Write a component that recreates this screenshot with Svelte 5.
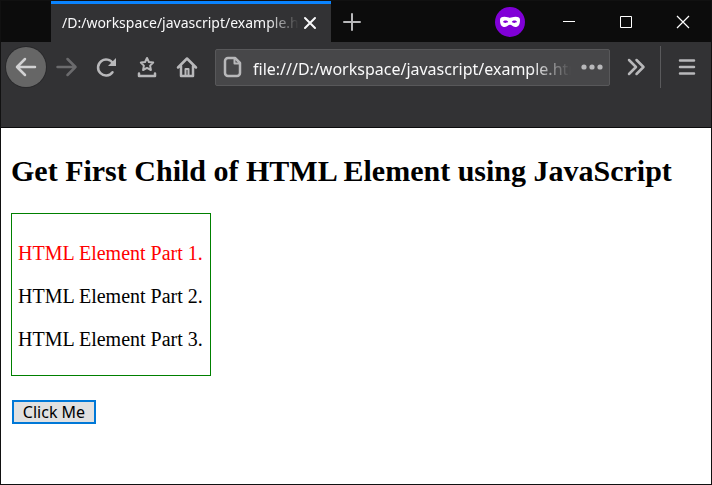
<script lang="ts">
	const tabTitle = '/D:/workspace/javascript/example.html';
	const parts = ['HTML Element Part 1.', 'HTML Element Part 2.', 'HTML Element Part 3.'];

	let address = $state('file:///D:/workspace/javascript/example.html');
	let highlighted = $state(0);
</script>

<div class="window">
	<header class="title-bar">
		<div class="tab">
			<span class="tab-title">{tabTitle}</span>
			<button class="tab-close" aria-label="Close tab">
				<svg width="14" height="14" viewBox="0 0 14 14">
					<path d="M2 2l10 10M12 2L2 12" stroke="#f9f9fa" stroke-width="2" stroke-linecap="round" />
				</svg>
			</button>
		</div>
		<button class="new-tab" aria-label="New tab">
			<svg width="20" height="20" viewBox="0 0 20 20">
				<path d="M10 2v16M2 10h16" stroke="#b8b8ba" stroke-width="2" stroke-linecap="round" />
			</svg>
		</button>
		<div class="private">
			<svg width="20" height="12" viewBox="0 0 20 12">
				<path
					fill="#fff"
					fill-rule="evenodd"
					d="M0 4C0 2 1.500 .8 4.500 .8c2.500 0 4 1 5.500 1s3-1 5.500-1c3 0 4.500 1.200 4.500 3.200 0 4.500-1.500 7-4.800 7-2.700 0-3.400-2.200-5.200-2.200S7.500 11 4.800 11C1.500 11 0 8.500 0 4zM3 5.700C4 7.300 7 7.300 8.200 5.700 7 4.100 4 4.100 3 5.700zM11.800 5.700c1.200 1.600 4.200 1.600 5.200 0-1-1.600-4-1.600-5.200 0z"
				/>
			</svg>
		</div>
		<div class="window-controls">
			<button aria-label="Minimize">
				<svg width="14" height="14" viewBox="0 0 14 14"><path d="M1 6.500h12" stroke="#fff" /></svg>
			</button>
			<button aria-label="Maximize">
				<svg width="14" height="14" viewBox="0 0 14 14">
					<path d="M1.500 1.500h11v11h-11z" stroke="#fff" />
				</svg>
			</button>
			<button aria-label="Close">
				<svg width="14" height="14" viewBox="0 0 14 14">
					<path d="M1 1l12 12M13 1L1 13" stroke="#fff" stroke-width="1.200" />
				</svg>
			</button>
		</div>
	</header>

	<nav class="toolbar">
		<button class="tool back" aria-label="Back">
			<svg width="24" height="24" viewBox="0 0 24 24">
				<path d="M3 12h18M11 4l-8 8 8 8" />
			</svg>
		</button>
		<button class="tool" aria-label="Forward" disabled>
			<svg width="24" height="24" viewBox="0 0 24 24">
				<path d="M3.500 12h18M13.500 4l8 8-8 8" />
			</svg>
		</button>
		<button class="tool" aria-label="Reload">
			<svg width="24" height="24" viewBox="0 0 24 24">
				<path d="M18.500 17.200A8 8 0 1 1 19 8.500" />
				<path d="M22 3v8h-8z" class="solid" />
			</svg>
		</button>
		<button class="tool" aria-label="Bookmarks">
			<svg width="24" height="24" viewBox="0 0 24 24">
				<path
					d="M13 3l1.900 4 4.300.6-3.100 3 .8 4.400-3.900-2.100L9.100 15l.8-4.400-3.100-3 4.300-.6z"
					class="thin"
				/>
				<path d="M5 18.500v2.500h16v-2.500" />
			</svg>
		</button>
		<button class="tool" aria-label="Home">
			<svg width="24" height="24" viewBox="0 0 24 24">
				<path d="M4 12.500l9-9 9 9M7 11v10h12V11" />
				<path d="M11.500 20v-6h3v6" class="thin" />
			</svg>
		</button>
		<div class="address-bar">
			<svg width="20" height="22" viewBox="0 0 20 22">
				<path d="M5 2h7l5 5v10a3 3 0 0 1-3 3H5a3 3 0 0 1-3-3V5a3 3 0 0 1 3-3z" />
				<path d="M11.500 2.500V7.500H16.500" class="thin" />
			</svg>
			<input class="address" type="text" aria-label="Address" bind:value={address} />
			<button class="page-actions" aria-label="Page actions">
				<svg width="22" height="6" viewBox="0 0 22 6">
					<circle cx="3" cy="3" r="2.600" />
					<circle cx="11" cy="3" r="2.600" />
					<circle cx="19" cy="3" r="2.600" />
				</svg>
			</button>
		</div>
		<button class="tool more" aria-label="More tools">
			<svg width="24" height="24" viewBox="0 0 24 24">
				<path d="M6 5l7 7-7 7M13.500 5l7 7-7 7" />
			</svg>
		</button>
		<button class="tool menu" aria-label="Open menu">
			<svg width="24" height="24" viewBox="0 0 24 24">
				<path d="M6 5.500h14M6 12h14M6 18.500h14" />
			</svg>
		</button>
	</nav>

	<main>
		<h2>Get First Child of HTML Element using JavaScript</h2>
		<div class="parent">
			{#each parts as part, i (part)}
				<p class:highlighted={i === highlighted}>{part}</p>
			{/each}
		</div>
		<button class="click-me" onclick={() => (highlighted = 0)}>Click Me</button>
	</main>
</div>

<style>
	.window {
		display: flex;
		flex-direction: column;
		box-sizing: border-box;
		min-height: 100vh;
		border: 1px solid #111;
		background: #fff;
		font-family: 'Noto Sans', 'Open Sans', sans-serif;
	}

	button {
		margin: 0;
		padding: 0;
		border: none;
		background: none;
		font-family: inherit;
	}

	svg {
		display: block;
		fill: none;
	}

	.title-bar {
		display: flex;
		height: 41px;
		padding-left: 50px;
		background: #0c0c0c;
	}

	.tab {
		display: flex;
		align-items: center;
		flex: 0 1 280px;
		box-sizing: border-box;
		min-width: 0;
		padding: 0 14px 0 11px;
		border-top: 3px solid #0a84ff;
		background: #323234;
	}

	.tab-title {
		flex: 1;
		overflow: hidden;
		color: #f9f9fa;
		font-size: 14px;
		line-height: 20px;
		white-space: nowrap;
		mask-image: linear-gradient(to left, transparent, #000 32px);
	}

	.tab-close {
		margin-left: 4px;
	}

	.new-tab {
		display: flex;
		align-items: center;
		justify-content: center;
		width: 42px;
	}

	.private {
		display: flex;
		align-items: center;
		justify-content: center;
		align-self: center;
		width: 30px;
		height: 30px;
		margin-left: auto;
		border-radius: 50%;
		background: #8000d7;
	}

	.window-controls {
		display: flex;
		margin-left: 15px;
	}

	.window-controls button {
		display: flex;
		align-items: center;
		justify-content: center;
		width: 57px;
	}

	.toolbar {
		display: flex;
		align-items: center;
		padding: 4px 0 39px 5px;
		border-bottom: 1px solid #0c0c0d;
		background: #323234;
	}

	.tool {
		display: flex;
		align-items: center;
		justify-content: center;
		flex: none;
		width: 40px;
		height: 42px;
	}

	.tool path,
	.address-bar path {
		stroke: #b8b8ba;
		stroke-width: 2.5;
		stroke-linecap: round;
		stroke-linejoin: round;
	}

	.tool path.thin,
	.address-bar path.thin {
		stroke-width: 2;
	}

	.tool path.solid {
		fill: #b8b8ba;
		stroke: none;
	}

	.tool:disabled path {
		stroke: #6b6b6d;
	}

	.back {
		height: 40px;
		border-radius: 50%;
		background: #666;
		box-shadow: 0 0 0 1px #29292b;
	}

	.back path {
		stroke: #d2d2d3;
	}

	.address-bar {
		display: flex;
		align-items: center;
		flex: 1;
		box-sizing: border-box;
		min-width: 0;
		height: 37px;
		margin-left: 9px;
		padding: 0 6px 0 7px;
		border: 1px solid #58585a;
		border-radius: 2px;
		background: #474749;
	}

	.address {
		flex: 1;
		min-width: 0;
		margin: 0 10px;
		padding: 3px 0 0;
		border: none;
		outline: none;
		background: none;
		color: #f9f9fa;
		font-family: inherit;
		font-size: 16px;
		line-height: 24px;
		mask-image: linear-gradient(to left, transparent, #000 40px);
	}

	.page-actions circle {
		fill: #b8b8ba;
	}

	.more {
		width: 50px;
	}

	.menu {
		width: 51px;
		border-left: 1px solid #5a5a5c;
	}

	main {
		padding: 0 10px 10px;
		color: #000;
		font-family: 'Liberation Serif', 'Times New Roman', serif;
		font-size: 20px;
		line-height: 23px;
	}

	h2 {
		margin: 26px 0 25px;
		font-size: 30px;
		line-height: 34px;
	}

	.parent {
		box-sizing: border-box;
		width: 200px;
		padding: 8px 6px 4px;
		border: 1px solid #008000;
	}

	.parent p {
		margin: 20px 0;
		white-space: nowrap;
	}

	.parent .highlighted {
		color: #f00;
	}

	.click-me {
		display: block;
		width: 84px;
		height: 24px;
		margin: 24px 0 0 1px;
		border: 2px solid #0078d7;
		background: #e1e1e1;
		color: #000;
		font-family: 'Noto Sans', Tahoma, sans-serif;
		font-size: 16px;
		line-height: 20px;
	}
</style>
